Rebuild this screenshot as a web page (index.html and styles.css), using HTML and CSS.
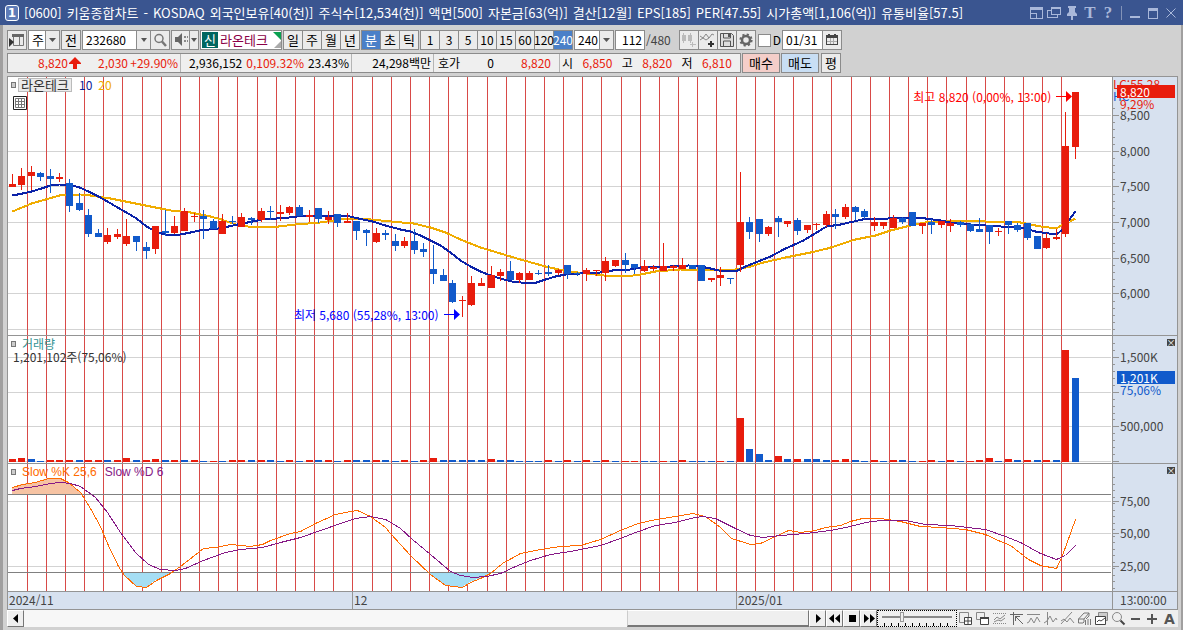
FILE: index.html
```html
<!DOCTYPE html>
<html lang="ko">
<head>
    <meta charset="UTF-8">
    <meta name="viewport" content="width=device-width, initial-scale=1.0">
    <title>[0600] 키움종합차트</title>
    <link rel="stylesheet" href="styles.css">
</head>
<body>
    <header class="titulo">
        <span class="numero">1</span>
        <h1 class="titulo-texto">
            <span>[0600]</span><span>키움종합차트</span><span>-</span><span>KOSDAQ</span>
            <span>외국인보유[40(천)]</span><span>주식수[12,534(천)]</span><span>액면[500]</span>
            <span>자본금[63(억)]</span><span>결산[12월]</span><span>EPS[185]</span><span>PER[47.55]</span>
            <span>시가총액[1,106(억)]</span><span>유통비율[57.5]</span>
        </h1>
        <div class="janela">
            <button type="button" aria-label="화면 배치"><svg width="13" height="13"><path d="M0 1h13v12H0zM1 4v3h6v5h5V4z" fill-rule="evenodd"/><path d="M1 7h5v5H1z" fill="#3a5590"/><path d="M0 7h7v6H6V8H0z"/></svg></button>
            <button type="button" aria-label="창 복사"><svg width="14" height="13"><path d="M4 1h10v8H4zM5 3v5h8V3z" fill-rule="evenodd"/><path d="M0 4h4v1H1v6h9v-2h1v3H0z"/></svg></button>
            <button type="button" aria-label="고정"><svg width="12" height="14"><path d="M2 0h8v2H9v4l2 2v2H7v4H5v-4H1V8l2-2V2H2z"/></svg></button>
            <button type="button" class="letra" aria-label="글꼴">T</button>
            <button type="button" class="letra" aria-label="도움말">?</button>
            <span class="separador"></span>
            <button type="button" aria-label="최소화"><svg width="12" height="13"><path d="M1 10h10v2H1z"/></svg></button>
            <button type="button" aria-label="최대화"><svg width="12" height="13"><path d="M1 2h10v3H1zM1 2h1v11H1zM10 2h1v11h-1zM1 12h10v1H1z"/></svg></button>
            <button type="button" aria-label="닫기"><svg width="12" height="13"><path d="M1.500 2.500l9 9M10.500 2.500l-9 9" fill="none" stroke="currentColor"/></svg></button>
        </div>
    </header>

    <div class="corpo">
        <div class="barra">
            <button type="button" class="botao" aria-label="종목 목록"><svg width="18" height="18"><path d="M5.500 3.500h10v11h-10zM11.500 5v9" fill="none" stroke="#777"/><path d="M4 3h12v3H4z" fill="#666"/><path d="M1 7l5 4-5 5z" fill="#333"/></svg></button>
            <select class="lista lista-tipo" aria-label="구분"><option>주</option></select>
            <button type="button" class="botao">전</button>
            <div class="codigo">
                <input type="text" value="232680" aria-label="종목코드">
                <button type="button" class="seta" aria-label="최근 종목"></button>
                <button type="button" aria-label="검색"><svg width="18" height="18"><circle cx="8" cy="7.500" r="4" fill="none" stroke="#777" stroke-width="1.500"/><path d="M11 10.500l4 4.500" stroke="#777" stroke-width="2.500"/></svg></button>
            </div>
            <div class="som">
                <button type="button" aria-label="소리"><svg width="16" height="18"><path d="M2 6h3l4-4v13l-4-4H2z" fill="#666"/><path d="M11 5h2v2h-2zM14 5h1v2h-1zM11 9h2v2h-2zM14 9h1v2h-1z" fill="#888"/></svg></button>
                <button type="button" class="seta" aria-label="소리 설정"></button>
            </div>
            <div class="acao"><span class="nova">신</span><span>라온테크</span><i class="canto"></i></div>
            <div class="grupo">
                <button type="button">일</button><button type="button">주</button><button type="button">월</button><button type="button">년</button>
            </div>
            <div class="grupo">
                <button type="button" class="ativo">분</button><button type="button">초</button><button type="button">틱</button>
            </div>
            <div class="grupo grupo-minutos">
                <button type="button">1</button><button type="button">3</button><button type="button">5</button><button type="button">10</button><button type="button">15</button><button type="button">60</button><button type="button">120</button><button type="button" class="ativo">240</button>
            </div>
            <select class="lista lista-minutos" aria-label="분 간격"><option>240</option></select>
            <input type="text" class="quantidade" value="112" aria-label="봉 개수">
            <span class="total">/480</span>
            <div class="grupo grupo-icones">
                <button type="button" aria-label="봉 추가"><svg width="18" height="18" fill="#bbb"><path d="M2 4h4v6H2zM3 2h1v10H3zM8 4h4v6H8zM10 2h1v10h-1zM10 13h6v1h-6zM12 11h1v5h-1z"/></svg></button>
                <button type="button" aria-label="지표 추가"><svg width="18" height="18"><path d="M1 5l3 2 3-4 3 4 3-4 2 1M1 9l3-2 3 2 3-2" fill="none" stroke="#888"/><path d="M9 12h6v2H9zM11 10h2v6h-2z" fill="#333"/></svg></button>
                <button type="button" aria-label="저장"><svg width="18" height="18"><path d="M2.500 2.500h11l2 2v11h-13z" fill="#ddd" stroke="#555"/><path d="M5.500 3v4h7V3M5.500 15v-5h7v5" fill="none" stroke="#555"/><path d="M10 3h2v3h-2z" fill="#555"/></svg></button>
                <button type="button" aria-label="설정"><svg width="18" height="18"><circle cx="9" cy="9" r="4" fill="none" stroke="#666" stroke-width="2.500"/><circle cx="9" cy="9" r="5.600" fill="none" stroke="#666" stroke-width="2" stroke-dasharray="2.200 2.200"/></svg></button>
            </div>
            <label class="dia"><input type="checkbox">D</label>
            <div class="data">
                <input type="text" value="01/31" aria-label="날짜">
                <button type="button" aria-label="달력"><svg width="18" height="18"><path d="M3.500 4.500h11v9h-11zM4 10.500h10M7.500 6v8M10.500 6v8" fill="none" stroke="#aaa"/><path d="M3 4h12v3H3zM5 3h2v1H5zM11 3h2v1h-2z" fill="#444"/><path d="M3 6h1v8H3zM14 6h1v8h-1zM3 13h12v1H3z" fill="#444"/></svg></button>
            </div>
        </div>

        <div class="barra">
            <div class="cotacao">
                <div class="preco alta"><span>8,820</span><svg width="14" height="14"><path d="M7 1l6 6v1h-4v5H5V8H1V7z" fill="#e81c0c"/></svg><span>2,030</span><span>+29.90%</span></div>
                <div class="volume"><span>2,936,152</span><span class="alta">0,109.32%</span><span>23.43%</span></div>
                <div class="valor">24,298백만</div>
                <div class="hoga"><span>호가</span><span>0</span><span class="alta">8,820</span></div>
                <div class="extremos">
                    <span>시</span><span class="alta">6,850</span><span>고</span><span class="alta">8,820</span><span>저</span><span class="alta">6,810</span>
                </div>
            </div>
            <button type="button" class="botao comprar">매수</button>
            <button type="button" class="botao vender">매도</button>
            <button type="button" class="botao media">평</button>
        </div>

        <main class="grafico">
            <section class="painel painel-preco">
                <div class="area">
                    <svg id="preco" class="desenho" viewBox="8 77 1104 258" preserveAspectRatio="none"></svg>
                    <div class="legenda">
                        <i class="marca"></i><button type="button" class="nome">라온테크</button><span class="ma10">10</span><span class="ma20">20</span>
                    </div>
                    <button type="button" class="tabela" aria-label="표"><svg width="14" height="14"><path d="M.5 .5h13v13H.5z" fill="#fff" stroke="#222"/><path d="M2.500 2.500h9v9h-9zM2.500 5.500h9M2.500 8.500h9M5.500 3v8M8.500 3v8" fill="none" stroke="#777"/></svg></button>
                    <div class="nota maxima">최고 8,820 (0,00%, 13:00)<svg width="16" height="12"><path d="M0 5h10V0l6 5.500L10 11V6H0z"/></svg></div>
                    <div class="nota minima">최저 5,680 (55,28%, 13:00)<svg width="16" height="12"><path d="M0 5h10V0l6 5.500L10 11V6H0z"/></svg></div>
                </div>
                <div class="eixo" id="eixoPreco">
                    <span class="limite alta">LC:55,28</span>
                    <span class="limite baixa">HC</span>
                    <span class="percentual alta">9,29%</span>
                    <span class="atual">8,820</span>
                </div>
            </section>
            <section class="painel">
                <div class="area">
                    <svg id="volume" class="desenho" viewBox="8 336 1104 127" preserveAspectRatio="none"></svg>
                    <div class="legenda"><i class="marca"></i><span class="titulo-volume">거래량</span></div>
                    <div class="resumo">1,201,102주(75,06%)</div>
                </div>
                <div class="eixo" id="eixoVolume">
                    <span class="percentual percentual-volume">75,06%</span>
                    <span class="atual atual-volume">1,201K</span>
                    <button type="button" class="fechar" aria-label="거래량 닫기">×</button>
                </div>
            </section>
            <section class="painel">
                <div class="area">
                    <svg id="slow" class="desenho" viewBox="8 464 1104 127" preserveAspectRatio="none"></svg>
                    <div class="legenda legenda-slow"><i class="marca"></i><span class="slow-k">Slow %K 25,6</span><span class="slow-d">Slow %D 6</span></div>
                </div>
                <div class="eixo" id="eixoSlow">
                    <button type="button" class="fechar" aria-label="Slow 닫기">×</button>
                </div>
            </section>
            <div class="datas">
                <div class="meses"><span>2024/11</span><span>12</span><span>2025/01</span></div>
                <div class="hora">13:00:00</div>
            </div>
        </main>

        <footer class="rodape">
            <button type="button" class="controle" aria-label="왼쪽"><svg width="14" height="14"><path d="M9 2v9L4 6.500z"/></svg></button>
            <div class="trilho"><div class="polegar"></div></div>
            <button type="button" class="controle" aria-label="재생"><svg width="14" height="14"><path d="M5 2v9l5-4.500z"/></svg></button>
            <button type="button" class="controle" aria-label="뒤로"><svg width="14" height="14"><path d="M6 2v9L1 6.500zM12 2v9L7 6.500z"/></svg></button>
            <button type="button" class="controle" aria-label="정지"><svg width="14" height="14"><path d="M4 3h7v7H4z"/></svg></button>
            <button type="button" class="controle" aria-label="앞으로"><svg width="14" height="14"><path d="M2 2v9l5-4.500zM8 2v9l5-4.500z"/></svg></button>
            <div class="velocidade"><input type="range" min="0" max="11" value="3" aria-label="속도"></div>
            <div class="ferramentas">
                <button type="button" aria-label="창 추가"><svg width="15" height="15"><path d="M1.500 1.500h9v10h-9z"/><path d="M6.500 6.500h7v7h-7zM10 7v7M7 10h7" fill="#fff" stroke="#444"/></svg></button>
                <button type="button" aria-label="창 겹치기"><svg width="15" height="15"><path d="M1.500 1.500h8v7h-8z"/><path d="M5.500 6.500h8v7h-8z" fill="#fff" stroke="#444"/><path d="M5 6h9v2H5z" fill="#444" stroke="none"/></svg></button>
                <button type="button" aria-label="구간"><svg width="15" height="15"><path d="M1 2.500h13M1 12.500h13" stroke-dasharray="1 1"/><path d="M2 9l3-3 3 2 5-4M2 11l4-2 3 1 4-3"/></svg></button>
                <button type="button" aria-label="커서"><svg width="15" height="15"><path d="M1 3.500h13M4.500 1v13M6 5l8 8M6.500 10V5.500H11" stroke="#666"/></svg></button>
                <button type="button" aria-label="수평선"><svg width="15" height="15"><path d="M1 3.500h13M1 12l2-1 2-4 3 5 3-6 3 5"/></svg></button>
                <button type="button" aria-label="수직선"><svg width="15" height="15"><path d="M4.500 1v13M1 12l3-2 3-5 3 6 3-4 1 2"/></svg></button>
                <button type="button" aria-label="추세선"><svg width="15" height="15"><path d="M1 13L12 1M1 10l3-2 3 3 3-4 4 5"/></svg></button>
                <button type="button" aria-label="지우기"><svg width="15" height="15"><path d="M1.500 8L7 2h5l-5 6zM1.500 8v4H6l1-1V8M12 2v3l-3 3M8.500 9v5M11 8v6M13.500 8v6" stroke="#777"/></svg></button>
                <button type="button" aria-label="차트 저장"><svg width="15" height="15"><path d="M4.500 1.500h9v8h-9z" fill="#ccc"/><path d="M1.500 5.500h10v8h-10z" fill="#fff" stroke="#444"/><path d="M3 11l2-2 2 1 4-3" stroke="#444"/></svg></button>
                <button type="button" aria-label="확대경"><svg width="15" height="15"><circle cx="6" cy="6" r="4.500"/><path d="M9.500 9.500l4 4" stroke="#444" stroke-width="2"/></svg></button>
                <button type="button" aria-label="축소"><svg width="15" height="15"><path d="M3 8h9" stroke="#555" stroke-width="2"/></svg></button>
                <button type="button" aria-label="확대"><svg width="15" height="15"><path d="M2 8h10M7 3v10" stroke="#555" stroke-width="2"/></svg></button>
                <button type="button" class="letra-a" aria-label="자동">A</button>
            </div>
        </footer>
    </div>
    <script src="chart.js"></script>
</body>
</html>
```
FILE: styles.css
```css
* {
    box-sizing: border-box;
}

body {
    margin: 0;
    min-height: 100vh;
    display: flex;
    flex-direction: column;
    background: #d1d1d1;
    color: #000;
    font-family: "Noto Sans CJK KR", sans-serif;
    font-size: 13px;
    line-height: 16px;
}

button, input, select {
    font: inherit;
    color: inherit;
    margin: 0;
    padding: 0;
    border: none;
    border-radius: 0;
    background: none;
    outline: none;
}

button {
    display: flex;
    align-items: center;
    justify-content: center;
    white-space: nowrap;
}

svg {
    display: block;
}

/* barra de titulo */
.titulo {
    display: flex;
    align-items: center;
    height: 25px;
    padding: 0 5px;
    background: #3a5590;
    color: #fff;
}

.numero {
    width: 14px;
    height: 16px;
    border: 1px solid #fff;
    border-radius: 3px;
    background: #5f7cb8;
    font: bold 12px/14px "DejaVu Sans", sans-serif;
    text-align: center;
}

.titulo-texto {
    display: flex;
    gap: 5px;
    flex: 1;
    margin: 0 0 0 5px;
    font-size: 13px;
    font-weight: normal;
    white-space: nowrap;
}

.janela {
    display: flex;
    align-items: center;
    gap: 4px;
    color: #a9b8da;
}

.janela button {
    width: 14px;
    height: 16px;
}

.janela svg {
    fill: currentColor;
}

.janela .letra {
    font: bold 17px/16px "Liberation Serif", serif;
}

.separador {
    width: 1px;
    height: 14px;
    margin: 0 2px;
    background: #8393b8;
}

.corpo {
    flex: 1;
    display: flex;
    flex-direction: column;
    padding: 5px 3px 3px 4px;
    border-left: 3px solid #a09f9f;
    border-right: 2px solid #a09f9f;
}

/* barras de ferramentas */
.barra {
    display: flex;
    gap: 1px;
    height: 20px;
    margin-bottom: 3px;
}

.botao, .codigo, .som, .acao, .data, .lista, .quantidade {
    border: 1px solid #8b8b8b;
    background-color: #ebebeb;
}

.botao {
    width: 20px;
}

.lista {
    appearance: none;
    background: #fff url("data:image/svg+xml,%3Csvg xmlns='http://www.w3.org/2000/svg' width='14' height='18'%3E%3Cpath fill='%23ebebeb' d='M0 0h14v18H0z'/%3E%3Cpath fill='%238b8b8b' d='M0 0h1v18H0z'/%3E%3Cpath fill='%23555' d='M4 7h7l-3.500 4z'/%3E%3C/svg%3E") no-repeat right top;
    padding-left: 3px;
}

.lista-tipo {
    width: 32px;
}

.lista-minutos {
    width: 40px;
    font-size: 12px;
}

.codigo, .som, .data {
    display: flex;
}

.codigo {
    width: 88px;
    font-size: 12px;
}

.codigo input, .data input {
    flex: 1;
    min-width: 0;
    padding-left: 3px;
    background: #fff;
}

.codigo button, .som button, .data button {
    width: 19px;
    border-left: 1px solid #8b8b8b;
}

.som button:first-child {
    width: 17px;
    border-left: none;
}

.codigo .seta {
    width: 14px;
}

.som .seta {
    width: 9px;
}

.seta::before {
    content: "";
    border: 3px solid transparent;
    border-top: 4px solid #555;
    border-bottom: none;
}

.acao {
    display: flex;
    gap: 2px;
    width: 82px;
    padding: 1px;
    background: #fff;
    color: #8a0046;
    line-height: 16px;
    position: relative;
}

.nova {
    width: 16px;
    background: #006660;
    color: #fff;
    text-align: center;
}

.canto {
    position: absolute;
    right: 0;
    top: 1px;
    border-top: 8px solid #0aa050;
    border-left: 8px solid transparent;
}

.canto::after {
    content: "";
    position: absolute;
    right: 0;
    top: 1px;
    border-bottom: 7px solid #aaa;
    border-left: 7px solid transparent;
}

.grupo {
    display: flex;
    border: 1px solid #8b8b8b;
    background: #ebebeb;
}

.grupo button {
    width: 19px;
    border-right: 1px solid #8b8b8b;
}

.grupo button:last-child {
    width: 18px;
    border-right: none;
}

.grupo-minutos {
    font-size: 12px;
}

.grupo .ativo {
    background: #4a80c8;
    color: #fff;
}

.quantidade {
    width: 30px;
    padding-right: 2px;
    background: #fff;
    font-size: 12px;
    text-align: right;
}

.total {
    width: 32px;
    padding: 2px 0;
    color: #444;
    font-size: 12px;
}

.dia {
    display: flex;
    align-items: center;
    gap: 2px;
    width: 24px;
    padding-left: 1px;
    font-size: 12px;
}

.dia input {
    appearance: none;
    width: 13px;
    height: 13px;
    border: 1px solid #8b8b8b;
    background: #fff;
}

.data {
    width: 60px;
    font-size: 12px;
}

/* linha da cotação */
.cotacao {
    display: flex;
    width: 734px;
    border: 1px solid #8b8b8b;
    background: #efefef;
    font-size: 12px;
}

.cotacao > div {
    display: flex;
    align-items: center;
    border-right: 1px solid #b5b5b5;
    padding-right: 2px;
    white-space: nowrap;
}

.cotacao > div:last-child {
    border-right: none;
}

.alta {
    color: #e81c0c;
}

.baixa {
    color: #115acb;
}

.preco {
    width: 173px;
}

.preco span:first-child {
    width: 60px;
    text-align: right;
}

.preco span:nth-of-type(2) {
    width: 46px;
    text-align: right;
}

.preco span:last-child {
    flex: 1;
    text-align: right;
}

.volume {
    width: 171px;
    justify-content: flex-end;
    gap: 4px;
}

.valor {
    width: 82px;
    justify-content: flex-end;
}

.hoga {
    width: 126px;
    padding-left: 4px;
    justify-content: space-between;
}

.cotacao .hoga {
    padding-right: 8px;
}

.extremos {
    flex: 1;
    padding-left: 2px;
    justify-content: space-between;
}

.cotacao .extremos {
    padding-right: 8px;
}

.comprar {
    width: 38px;
    background: #f4cec9;
}

.vender {
    width: 38px;
    background: #c8def4;
}

.media {
    margin-left: 1px;
}

/* gráfico */
.grafico {
    flex: 1;
    display: flex;
    flex-direction: column;
    border: 1px solid #949494;
    background: #fff;
    font-size: 12px;
}

.painel {
    flex: 127 1 0;
    display: flex;
    border-bottom: 1px solid #949494;
}

.painel-preco {
    flex-grow: 258;
}

.area {
    flex: 1;
    position: relative;
    overflow: hidden;
}

.desenho {
    position: absolute;
    width: 100%;
    height: 100%;
    shape-rendering: crispEdges;
}

.linha {
    fill: none;
    stroke-linejoin: round;
}

.eixo {
    width: 65px;
    flex: none;
    position: relative;
    overflow: hidden;
    border-left: 1px solid #949494;
    background: #d7e1ef;
    color: #444;
}

.risco {
    position: absolute;
    left: 0;
    width: 2px;
    height: 1px;
    background: #949494;
}

.risco-maior {
    width: 6px;
}

.rotulo {
    position: absolute;
    left: 7px;
    line-height: 14px;
    margin-top: -7px;
}

.atual, .percentual, .limite, .fechar {
    position: absolute;
}

.atual {
    left: 4px;
    right: 2px;
    top: 8px;
    height: 13px;
    padding-left: 3px;
    background: #e81c0c;
    color: #fff;
    line-height: 13px;
}

.percentual {
    left: 7px;
    top: 20px;
    line-height: 13px;
}

.limite {
    left: 0;
    top: 0;
    line-height: 14px;
}

.limite.baixa {
    top: 12px;
}

.atual-volume {
    top: 35px;
    background: #115acb;
}

.percentual-volume {
    top: 47px;
    color: #115acb;
}

.fechar {
    right: 2px;
    top: 3px;
    width: 8px;
    height: 7px;
    background: #444;
    color: #fff;
    font-size: 9px;
    line-height: 7px;
}

.legenda {
    position: absolute;
    left: 3px;
    top: 1px;
    display: flex;
    align-items: center;
    height: 14px;
}

.marca {
    width: 5px;
    height: 6px;
    margin-right: 6px;
    border: 1px solid #777;
    background: #ccc;
}

.nome {
    height: 14px;
    width: 54px;
    margin-left: -4px;
    border: 1px solid #bbb;
    background: #ebebeb;
    color: #333;
    font-size: 13px;
}

.ma10 {
    margin-left: 7px;
    color: #0b2299;
}

.ma20 {
    margin-left: 6px;
    color: #f0ac00;
}

.tabela {
    position: absolute;
    left: 5px;
    top: 19px;
}

.titulo-volume {
    color: #339494;
}

.resumo {
    position: absolute;
    left: 5px;
    top: 13px;
    color: #333;
}

.legenda-slow {
    font-family: "Liberation Sans", sans-serif;
}

.slow-k {
    color: #ff6a00;
}

.slow-d {
    margin-left: 8px;
    color: #861986;
}

.nota {
    position: absolute;
    display: flex;
    align-items: center;
    gap: 5px;
    white-space: nowrap;
}

.nota svg {
    fill: currentColor;
}

.maxima {
    right: 3.600%;
    top: 4.500%;
    color: #f00;
}

.minima {
    right: 59.100%;
    top: 89%;
    color: #00f;
}

/* datas */
.datas {
    display: flex;
    height: 17px;
    background: #d7e1ef;
    color: #444;
}

.meses {
    flex: 1;
    display: grid;
    grid-template-columns: 344fr 384fr 376fr;
}

.meses span {
    padding-left: 1px;
}

.meses span + span {
    border-left: 1px solid #949494;
}

.hora {
    width: 65px;
    padding-left: 7px;
    border-left: 1px solid #949494;
}

/* rodapé */
.rodape {
    display: flex;
    height: 17px;
    background: #efefef;
}

.controle {
    width: 17px;
    border: 1px solid;
    border-color: #fff #777 #777 #fff;
    background: #efefef;
}

.trilho {
    flex: 1;
    display: flex;
    justify-content: flex-end;
    background: #f7f7f7;
}

.polegar {
    width: 23.200%;
    border: 1px solid;
    border-color: #fff #777 #777 #ccc;
    border-bottom-width: 2px;
    background: #efefef;
}

.velocidade {
    width: 80px;
    padding: 0 4px;
    border: 1px dotted #000;
    background: repeating-linear-gradient(to right, #000 0 1px, transparent 1px 7px) 6px 100% / 68px 3px no-repeat;
}

.velocidade input {
    appearance: none;
    display: block;
    width: 100%;
    height: 11px;
    background: linear-gradient(#8a8a8a, #8a8a8a) center / 100% 2px no-repeat;
}

.velocidade input::-webkit-slider-thumb {
    appearance: none;
    width: 4px;
    height: 10px;
    border: 1px solid #999;
    background: #eee;
}

.ferramentas {
    display: flex;
    justify-content: space-between;
    width: 221px;
    padding: 0 1px;
}

.ferramentas svg {
    fill: none;
    stroke: #888;
}

.ferramentas .letra-a {
    width: 15px;
    color: #555;
    font: bold 14px/16px "DejaVu Sans", sans-serif;
}
```
FILE: chart.js
```js
// cor, máxima, topo do corpo, base do corpo, mínima
const velas = `
R174,184,187,187 R168,176,185,190 R166,172,176,190 B172,173,177,181 B169,176,179,193 R173,177,179,182
B179,183,206,212 B193,203,210,211 B209,215,234,237 B229,233,237,237 R228,235,242,244 R229,234,237,239
R219,236,244,246 B236,236,242,251 B242,247,251,259 R226,226,249,254 B210,231,233,236 R216,226,233,234
R208,211,231,231 R213,216,217,222 B210,216,219,239 B219,221,229,229 R214,221,234,234 B216,221,222,224
R213,217,227,227 B217,218,220,225 R208,211,220,222 B206,211,212,220 R205,212,214,221 R206,207,213,215
B205,207,216,216 R210,215,217,222 B208,208,219,223 R211,217,220,224 B214,214,223,227 R213,221,223,223
B221,221,231,240 B229,230,233,246 R228,233,242,243 B230,233,235,240 B234,241,246,251 R237,241,246,248
B229,241,250,254 B243,249,252,257 B245,269,274,284 B269,275,281,281 B280,283,302,303 R296,300,301,317
R276,283,305,306 R278,283,286,286 R266,275,288,288 R269,272,276,281 B261,271,280,280 R272,273,280,283
R271,273,280,280 B270,273,274,275 B265,272,274,276 R269,270,273,275 B265,265,274,279 B272,273,274,276
R268,270,274,281 R270,270,271,276 R257,261,273,281 R260,260,266,267 B253,260,265,273 B264,264,268,274
R260,266,271,272 R265,267,269,271 R243,266,271,271 R265,266,268,271 R258,265,269,269 B265,265,269,269
B265,265,281,281 R278,278,280,282 R267,275,278,286 B278,278,279,284 R172,222,265,272 B217,222,232,239
B219,219,234,242 R226,227,234,236 B216,218,222,237 R221,221,224,227 B218,220,231,235 R225,225,230,233
R223,224,225,230 R211,214,225,227 B209,214,217,229 R204,207,217,219 B206,207,212,220 B209,211,217,219
R217,222,226,231 R222,222,226,229 R215,218,228,228 B217,218,222,224 B212,212,226,226 R223,223,226,234
B219,222,225,234 R221,221,225,228 R219,223,226,232 B221,222,225,227 B223,224,231,232 B218,229,232,232
B225,225,232,244 R228,231,232,236 B221,221,225,234 B223,225,230,232 B223,223,238,240 B236,236,249,249
R233,238,248,249 R229,237,239,240 R112,146,234,237 R92,92,147,159`.trim().split(/\s+/);

const volumes = `
R3 R4 B3 B1 R2 R2 R2 B2 R2 R2 B2 R2 R4 B2 R2 R3 B2 R2 B2 R2 B1 R1 B1 R2 R2 B2 R2 B2 B1 R2 B1 R2 B2 R2 B1 R2 B2 B2
R2 B2 B1 R2 B1 R2 R4 B2 B2 B2 B2 B2 R3 B2 B2 B1 B1 B1 R2 B1 R2 B1 R2 B1 R2 B1 R1 R1 B1 B1 R1 B1 R2 B1 B1 B1 R1 B1
R44 B13 B8 B2 R6 B3 R3 B3 B3 B2 R2 R3 B2 B1 R2 B1 R2 B2 B1 R1 R2 B1 R2 B1 R1 R2 R4 B1 R3 B2 R2 B2 R2 B2 R112 B84`.trim().split(/\s+/);

const ma10 = '12,195 22,193 31,191 41,188 50,185 59,184 69,184 79,187 88,191 98,196 107,201 117,207 126,212 136,218 146,226 155,231 161,233 170,235 180,234 190,232 199,230 209,229 218,228 228,226 237,224 247,222 257,220 266,218 276,218 289,217 304,215 345,215 358,218 372,221 385,225 400,229 410,231 420,235 430,240 440,245 450,252 460,260 470,266 480,271 490,275 500,278 511,281 520,282 536,282 545,279 555,276 565,274 580,273 600,272 612,270 630,269 640,267 670,266 688,265 700,266 710,268 718,270 735,271 745,266 755,262 770,256 783,249 803,240 826,226 840,224 862,219 888,218 910,217 925,218 940,220 950,222 970,224 1000,226 1015,227 1025,228 1035,231 1048,233 1056,234 1062,229 1068,220 1075,211';
const ma20 = '12,211 31,203 45,199 59,195 80,194 90,195 110,198 130,202 150,206 170,210 190,212 210,216 221,219 235,224 247,226 278,226 295,224 320,222 340,219 352,218 370,219 390,221 413,223 430,227 445,232 460,239 480,247 500,253 520,259 545,266 563,270 585,273 603,275 625,276 640,274 655,271 680,269 735,269 750,266 763,262 785,257 810,252 827,248 855,239 875,235 890,230 910,225 925,222 950,220 985,221 1020,222 1040,226 1056,228 1062,224 1069,221 1075,218';
const slowK = '12,487 22,484 35,482 48,478 60,478 68,482 80,492 90,508 100,526 107,543 118,566 124,575 136,586 146,587 156,580 170,573 180,566 203,548 215,547 230,544 250,546 262,544 270,540 290,533 300,531 315,523 335,514 345,512 357,510 370,516 385,527 390,533 400,544 410,555 430,574 445,585 462,587 470,582 480,578 490,573 502,563 520,553 540,549 560,546 580,545 600,539 620,530 635,524 650,520 675,516 692,513 705,516 720,527 731,538 750,544 760,543 775,536 788,530 800,532 815,530 825,527 840,525 850,521 862,518 880,518 900,521 920,526 940,527 965,529 985,534 1000,541 1010,545 1028,559 1040,565 1056,568 1062,555 1075,519';
const slowD = '12,490 20,488 35,486 50,483 60,482 70,483 80,486 95,497 107,512 120,532 135,552 148,564 160,569 175,570 185,568 203,560 225,552 240,549 262,547 280,542 300,537 320,530 340,523 355,518 370,516 385,519 392,523 400,528 412,539 430,554 450,571 460,575 472,577 486,576 500,573 515,566 530,560 550,554 570,551 600,545 620,538 635,532 655,525 675,522 690,518 702,516 715,518 735,528 750,535 762,537 780,535 805,533 830,530 850,526 865,522 880,520 905,520 925,524 950,525 985,529 1005,536 1020,542 1040,553 1056,559 1065,555 1075,545';

const cores = { R: '#e81c0c', B: '#115acb' };

function centro(i) {
    return Math.floor(12.037 + 9.5797 * i);
}

function ret(x, y, w, h, cor) {
    return `<rect x="${x}" y="${y}" width="${w}" height="${h}" fill="${cor}"/>`;
}

function linha(pontos, cor, largura) {
    return `<polyline class="linha" points="${pontos}" stroke="${cor}" stroke-width="${largura}" transform="translate(.5 .5)"/>`;
}

// linhas horizontais cinzas e verticais vermelhas
function grade(ys, topo, altura) {
    let s = ys.map(y => ret(8, y, 1103, 1, '#d3d3d3')).join('');
    for (let i = 2; i < velas.length; i += 2) {
        s += ret(centro(i) - 4, topo, 1, altura, '#d84a48');
    }
    return s;
}

// riscos e valores do eixo
function eixo(id, topo, altura, rotulos, inicio, passo) {
    const el = document.getElementById(id);
    let s = '';
    for (let y = inicio; y < topo + altura; y += passo) {
        s += `<i class="risco" style="top:${(y - topo) / altura * 100}%"></i>`;
    }
    for (const [y, texto] of rotulos) {
        const pos = (y - topo) / altura * 100;
        s += `<i class="risco risco-maior" style="top:${pos}%"></i>`;
        if (texto) {
            s += `<span class="rotulo" style="top:${pos}%">${texto}</span>`;
        }
    }
    el.insertAdjacentHTML('afterbegin', s);
}

let preco = grade([115, 151, 186, 222, 258, 293, 329], 77, 258);
preco += linha(ma20, '#f0ac00', 2) + linha(ma10, '#0b22a8', 2);
velas.forEach((v, i) => {
    const cor = cores[v[0]];
    const [max, topo, base, min] = v.slice(1).split(',').map(Number);
    preco += ret(centro(i), max, 1, min - max, cor) + ret(centro(i) - 3, topo, 7, base - topo, cor);
});
document.getElementById('preco').innerHTML = preco;

let volume = grade([357, 392, 426, 461], 336, 127);
volumes.forEach((v, i) => {
    const h = Number(v.slice(1));
    volume += ret(centro(i) - 3, 462 - h, 7, h, cores[v[0]]);
});
document.getElementById('volume').innerHTML = volume;

document.getElementById('slow').innerHTML =
    grade([501, 533, 566], 464, 127) +
    '<clipPath id="acima"><rect x="8" y="464" width="80" height="30"/></clipPath>' +
    '<clipPath id="abaixo"><rect x="8" y="573" width="560" height="18"/></clipPath>' +
    `<polygon points="12,494 ${slowK} 1075,494" fill="#f6c3a3" clip-path="url(#acima)"/>` +
    `<polygon points="12,573 ${slowK} 1075,573" fill="#a5def4" clip-path="url(#abaixo)"/>` +
    ret(8, 494, 1103, 1, '#808080') + ret(8, 572, 1103, 1, '#808080') +
    linha(slowK, '#ff6a00', 1) + linha(slowD, '#861986', 1);

eixo('eixoPreco', 77, 258, [[115, '8,500'], [151, '8,000'], [186, '7,500'], [222, '7,000'], [258, '6,500'], [293, '6,000']], 108, 7.13);
eixo('eixoVolume', 336, 127, [[357, '1,500K'], [392, ''], [426, '500,000'], [461, '']], 343, 6.95);
eixo('eixoSlow', 464, 127, [[501, '75,00'], [533, '50,00'], [566, '25,00']], 477, 6.5);
```
